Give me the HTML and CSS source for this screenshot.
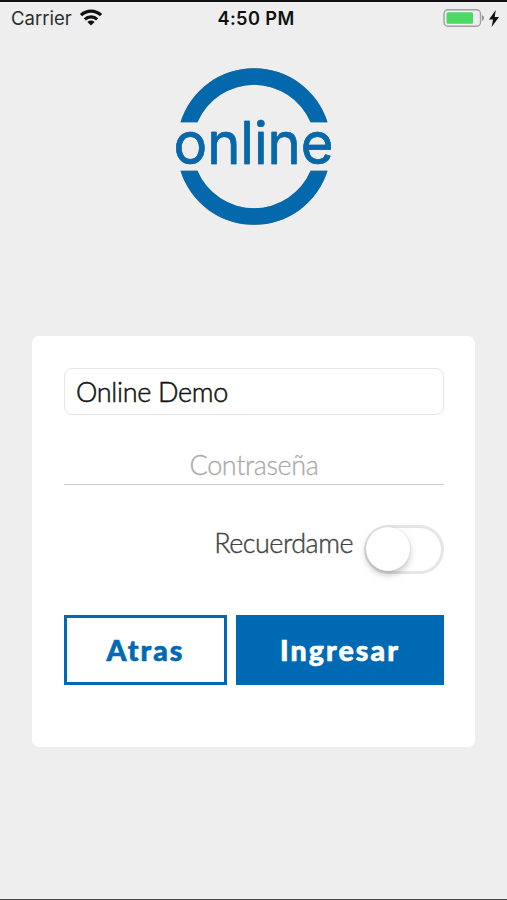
FILE: index.html
```html
<!DOCTYPE html>
<html lang="es">
<head>
    <meta charset="UTF-8">
    <meta name="viewport" content="width=device-width, initial-scale=1.0">
    <title>Online</title>
    <link rel="stylesheet" href="styles.css">
</head>
<body>

    <div class="screen">
        <header class="status-bar">
            <div class="status-left">
                <span class="carrier">Carrier</span>
                <svg class="wifi" width="24" height="17" viewBox="0 0 24 17">
                    <path d="M2 6.2a14.2 14.2 0 0 1 20 0" fill="none" stroke="#111" stroke-width="3.3"/>
                    <path d="M5.8 10.4a8.8 8.8 0 0 1 12.4 0" fill="none" stroke="#111" stroke-width="3.1"/>
                    <path d="M8.4 12.9a5.1 5.1 0 0 1 7.2 0L12 16.6z" fill="#111"/>
                </svg>
            </div>
            <span class="clock">4:50 PM</span>
            <div class="status-right">
                <svg width="42" height="18" viewBox="0 0 42 18">
                    <rect x="1" y=".7" width="36.5" height="16.6" rx="4" fill="none" stroke="#a0a0a0" stroke-width="1.4"/>
                    <rect x="3.5" y="3.2" width="26.5" height="11.6" rx="1.5" fill="#4cd964"/>
                    <path d="M39 6q2 .8 2 3t-2 3z" fill="#8e8e8e"/>
                </svg>
                <svg width="10" height="17" viewBox="0 0 10 17">
                    <path d="M6.8 0L0 9.6h4.1L2.6 17L10 7H5.7z" fill="#111"/>
                </svg>
            </div>
        </header>

        <div class="logo">
            <svg width="160" height="158" viewBox="0 0 160 158">
                <path d="M6.5 54.3a77 77 0 0 1 147 0H136.6a61.5 61.5 0 0 0-113.2 0z"/>
                <path d="M6.5 102.8a77 77 0 0 0 147 0H136.6a61.5 61.5 0 0 1-113.2 0z"/>
                <text class="logo-text" x="-.5" y="96" textLength="160" lengthAdjust="spacingAndGlyphs">online</text>
            </svg>
        </div>

        <main class="card">
            <div class="user-field">Online Demo</div>
            <div class="password-field"><span>Contraseña</span></div>
            <div class="remember">
                <span class="remember-label">Recuerdame</span>
                <div class="switch"><div class="knob"></div></div>
            </div>
            <div class="actions">
                <button class="btn btn-back"><span>Atras</span></button>
                <button class="btn btn-enter"><span>Ingresar</span></button>
            </div>
        </main>
    </div>

</body>
</html>
```

FILE: styles.css
```css
* {
    box-sizing: border-box;
}
body {
    margin: 0;
    background-color: #eee;
    font-family: Lato, "Liberation Sans", sans-serif;
}
.screen {
    height: 900px;
    border-top: 2px solid #111;
    border-bottom: 1px solid #444;
}

/* Status bar */
.status-bar {
    display: grid;
    grid-template-columns: 1fr auto 1fr;
    align-items: center;
    height: 32px;
    padding: 0 8px 0 11px;
    font-family: Inter, sans-serif;
    font-size: 19px;
    color: #111;
}
.status-left {
    display: flex;
    align-items: center;
    gap: 7px;
}
.carrier {
    font-size: 18.5px;
    color: #2b2b2b;
}
.wifi {
    margin-bottom: 2px;
}
.clock {
    padding-left: 2px;
    font-size: 18.2px;
    font-weight: 600;
    letter-spacing: 0.4px;
}
.status-right {
    display: flex;
    align-items: center;
    justify-content: flex-end;
    gap: 4px;
}

/* Logo */
.logo {
    display: flex;
    justify-content: center;
    height: 302px;
    padding-top: 34px;
    fill: #0469ac;
}
.logo svg {
    overflow: visible;
    filter: drop-shadow(0 0.5px 0.6px rgba(0, 0, 0, 0.45));
}
.logo-text {
    font-family: Inter, sans-serif;
    font-size: 58.5px;
    font-weight: 400;
    stroke: #0469ac;
    stroke-width: 0.6;
    stroke-linejoin: round;
}

/* Login card */
.card {
    width: 443px;
    height: 411px;
    margin: 0 auto;
    padding: 32px 31px 0 32px;
    border-radius: 7px;
    background-color: #fff;
}
.user-field {
    height: 47px;
    padding-left: 11px;
    border: 1px solid #e6e6e6;
    border-radius: 8px;
    font-size: 27px;
    font-weight: 300;
    line-height: 45px;
    letter-spacing: -0.3px;
    color: #111;
    -webkit-text-stroke: 0.5px #111;
}
.password-field {
    height: 70px;
    padding-top: 31px;
    border-bottom: 1px solid #ccc;
    font-size: 27px;
    font-weight: 300;
    line-height: 38px;
    letter-spacing: -0.4px;
    text-align: center;
    color: #aaa;
    -webkit-text-stroke: 0.3px #aaa;
}
.remember {
    display: flex;
    justify-content: flex-end;
    gap: 11px;
    margin-top: 40px;
}
.remember-label {
    font-size: 27px;
    font-weight: 300;
    line-height: 35px;
    letter-spacing: -0.5px;
    color: #444;
    -webkit-text-stroke: 0.4px #444;
}
.switch {
    width: 80px;
    height: 49px;
    padding: 2px;
    border: 3px solid #e5e5e5;
    border-radius: 25px;
}
.knob {
    width: 44px;
    height: 44px;
    margin: -3px 0 0 -3px;
    border-radius: 50%;
    background-color: #fff;
    box-shadow: 0 4px 7px rgba(0, 0, 0, 0.22), 0 0 2px rgba(0, 0, 0, 0.12);
}
.actions {
    display: flex;
    gap: 9px;
    margin-top: 41px;
}
.btn {
    height: 70px;
    padding: 0;
    border: 3px solid #0069b4;
    font-family: Lato, sans-serif;
    font-size: 28.5px;
    font-weight: 900;
    letter-spacing: 2.1px;
    -webkit-text-stroke: 0.6px;
}
.btn-back {
    width: 163px;
    background-color: #fff;
    color: #0069b4;
}
.btn-enter {
    flex: 1;
    background-color: #0069b4;
    color: #fff;
}
```
